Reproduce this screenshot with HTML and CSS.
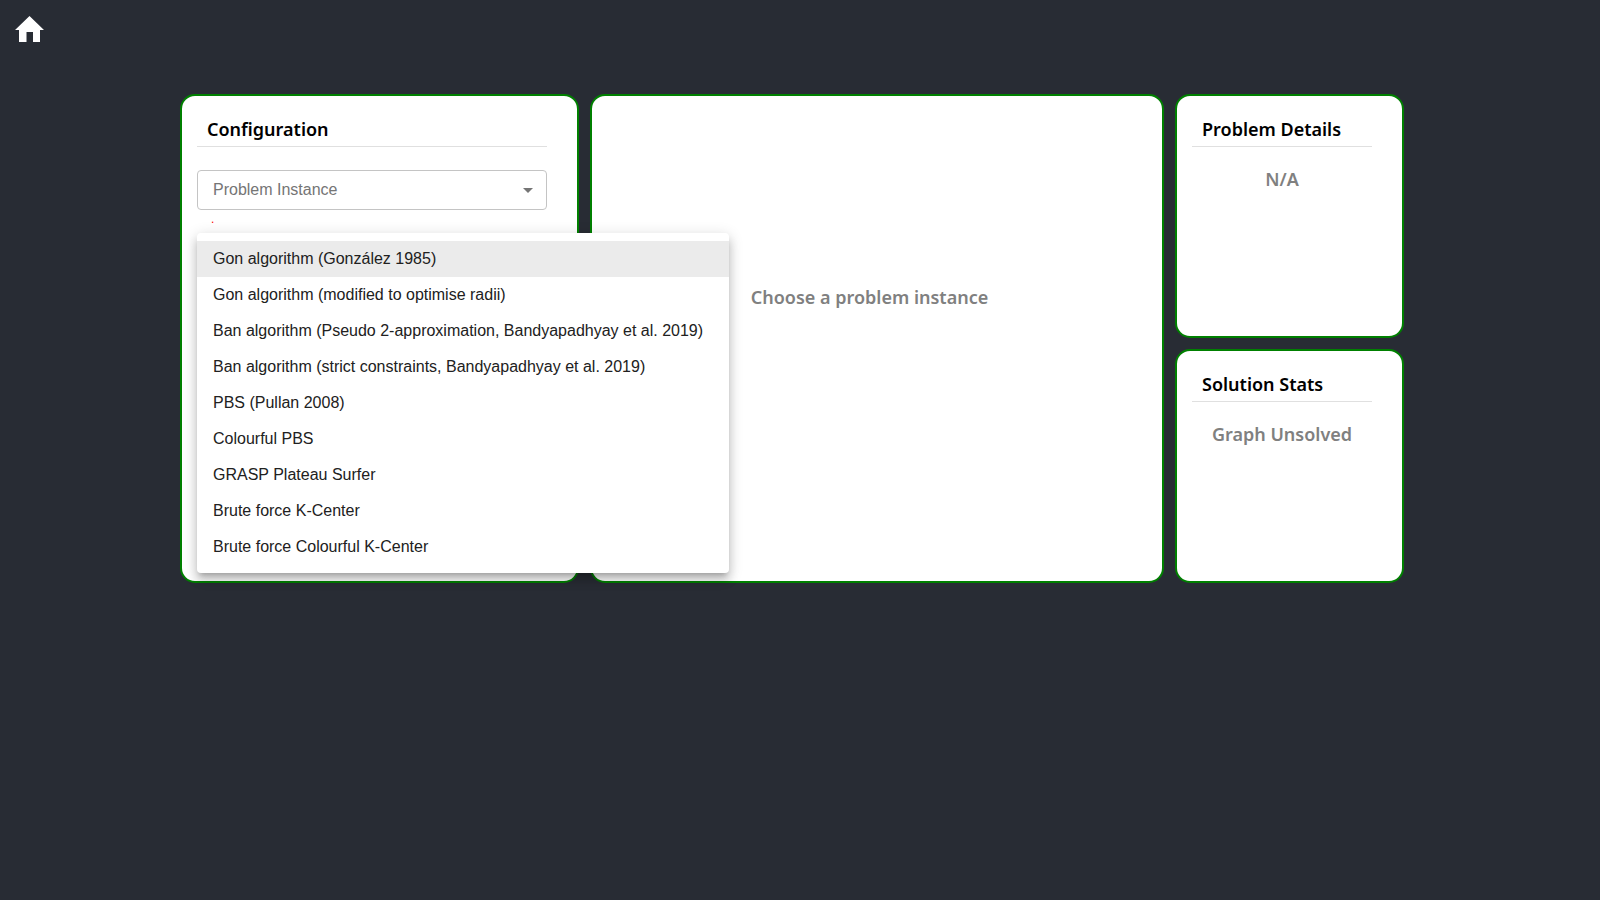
FILE: index.html
```html
<!DOCTYPE html>
<html lang="en">
<head>
<meta charset="utf-8">
<title>K-Center Solver</title>
<link rel="stylesheet" href="styles.css">
</head>
<body>
<header class="topbar">
  <a class="home" href="#" aria-label="Home">
    <svg viewBox="0 0 29 26" width="29" height="26" aria-hidden="true"><path d="M14.500 0 L29 14 H25 V26 H18 V16 H11.500 V26 H4 V14 H0 Z" fill="#fff"/></svg>
  </a>
</header>
<main class="board">
  <section class="panel config">
    <h2 class="panel-title">Configuration</h2>
    <div class="field">
      <select class="select" aria-label="Problem Instance" aria-describedby="instance-help">
        <option>Problem Instance</option>
      </select>
      <svg class="arrow" viewBox="0 0 24 24" width="24" height="24" aria-hidden="true"><path d="M7 10l5 5 5-5z" fill="#757575"/></svg>
    </div>
    <p class="helper" id="instance-help">.</p>
    <div class="menu" role="listbox" aria-label="Algorithm">
      <button class="item selected" type="button" role="option" aria-selected="true">Gon algorithm (González 1985)</button>
      <button class="item" type="button" role="option">Gon algorithm (modified to optimise radii)</button>
      <button class="item" type="button" role="option">Ban algorithm (Pseudo 2-approximation, Bandyapadhyay et al. 2019)</button>
      <button class="item" type="button" role="option">Ban algorithm (strict constraints, Bandyapadhyay et al. 2019)</button>
      <button class="item" type="button" role="option">PBS (Pullan 2008)</button>
      <button class="item" type="button" role="option">Colourful PBS</button>
      <button class="item" type="button" role="option">GRASP Plateau Surfer</button>
      <button class="item" type="button" role="option">Brute force K-Center</button>
      <button class="item" type="button" role="option">Brute force Colourful K-Center</button>
    </div>
  </section>
  <section class="panel graph">
    <p class="notice">Choose a problem instance</p>
  </section>
  <div class="side">
    <section class="panel details">
      <h2 class="panel-title">Problem Details</h2>
      <p class="notice">N/A</p>
    </section>
    <section class="panel stats">
      <h2 class="panel-title">Solution Stats</h2>
      <p class="notice">Graph Unsolved</p>
    </section>
  </div>
</main>
</body>
</html>
```

FILE: styles.css
```css
* {
  box-sizing: border-box;
}

body {
  margin: 0;
  min-height: 100vh;
  background: #282c34;
  color: #000;
  font-family: "Segoe UI", "Noto Sans", sans-serif;
}

.topbar {
  padding: 16px 15px 52px;
}

.home {
  display: block;
  width: 29px;
}

.home svg {
  display: block;
}

.board {
  display: grid;
  grid-template-columns: 399fr 574fr 229fr;
  gap: 11px;
  min-height: 489px;
  margin: 0 196px 0 180px;
}

.panel {
  border: 2px solid green;
  border-radius: 15px;
  padding: 20px 30px 15px 15px;
  background: #fff;
}

.config {
  position: relative;
}

.side {
  display: grid;
  grid-template-rows: 244fr 234fr;
  gap: 11px;
}

.panel-title {
  margin: 0;
  padding: 0 10px 4px;
  border-bottom: 1px solid #e0e0e0;
  font-size: 18px;
  font-weight: 600;
  line-height: 26px;
}

.notice {
  margin: 19px 0 0;
  color: gray;
  font-size: 18px;
  font-weight: 600;
  line-height: 26px;
  text-align: center;
}

.graph .notice {
  margin-top: 168px;
}

.field {
  position: relative;
  margin-top: 23px;
}

.select {
  display: block;
  width: 100%;
  height: 40px;
  padding: 0 32px 2px 15px;
  border: 1px solid #c4c4c4;
  border-radius: 4px;
  appearance: none;
  background: #fff;
  color: #757575;
  font: 16px "Liberation Sans", Arial, sans-serif;
}

.arrow {
  position: absolute;
  top: 8px;
  right: 7px;
  pointer-events: none;
}

.helper {
  margin: 0;
  padding: 0 14px;
  color: red;
  font: 12px/18px "Liberation Sans", Arial, sans-serif;
}

.menu {
  position: absolute;
  z-index: 1;
  top: 137px;
  left: 15px;
  min-width: 532px;
  padding: 8px 0;
  border-radius: 4px;
  background: #fff;
  box-shadow: 0 5px 5px -3px rgba(0, 0, 0, 0.2), 0 8px 10px 1px rgba(0, 0, 0, 0.14), 0 3px 14px 2px rgba(0, 0, 0, 0.12);
}

.item {
  display: block;
  width: 100%;
  padding: 6px 16px;
  border: 0;
  background: none;
  color: #212121;
  font: 16px/24px "Liberation Sans", Arial, sans-serif;
  text-align: left;
  white-space: nowrap;
}

.item.selected {
  background: #ebebeb;
}
```
